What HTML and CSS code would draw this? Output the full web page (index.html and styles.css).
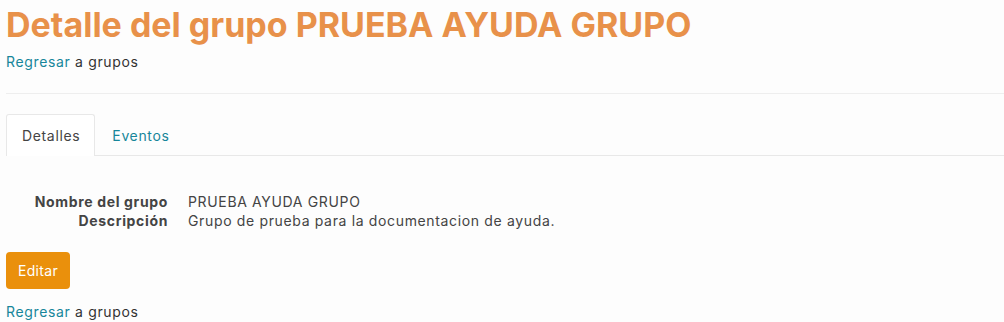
FILE: index.html
```html
<!DOCTYPE html>
<html lang="es">
<head>
    <meta charset="UTF-8">
    <meta name="viewport" content="width=device-width, initial-scale=1.0">
    <title>Detalle del grupo</title>
    <link rel="stylesheet" href="styles.css">
</head>
<body>
    <div class="container">
        <h1 class="title">Detalle del grupo PRUEBA AYUDA GRUPO</h1>
        <p class="back"><a href="#">Regresar</a> a grupos</p>
        <hr>
        <ul class="tabs">
            <li class="tab active"><a href="#">Detalles</a></li>
            <li class="tab"><a href="#">Eventos</a></li>
        </ul>
        <dl class="details">
            <dt>Nombre del grupo</dt>
            <dd>PRUEBA AYUDA GRUPO</dd>
            <dt>Descripción</dt>
            <dd>Grupo de prueba para la documentacion de ayuda.</dd>
        </dl>
        <button class="btn-edit">Editar</button>
        <p class="back back-bottom"><a href="#">Regresar</a> a grupos</p>
    </div>
</body>
</html>
```

FILE: styles.css
```css
body {
    font-family: 'Inter', 'Open Sans', sans-serif;
    margin: 0;
    padding: 0;
    background: #fdfdfd;
    color: #333;
    font-size: 14px;
    letter-spacing: 0.65px;
}
.container {
    padding: 0 0 0 6px;
}
a {
    color: #17869a;
    text-decoration: none;
}
.title {
    margin: 0;
    padding-top: 5px;
    font-size: 34px;
    line-height: 40px;
    font-weight: 700;
    letter-spacing: 0;
    color: #e8914a;
}
.back {
    margin: 7px 0 0;
    line-height: 20px;
}
hr {
    border: none;
    border-top: 1px solid #eeeeee;
    margin: 21px 0 0;
}
.tabs {
    list-style: none;
    margin: 20px 0 0;
    padding: 0;
    display: flex;
    border-bottom: 1px solid #e8e8e8;
}
.tab a {
    display: block;
    padding: 0 16px;
    line-height: 41px;
    border: 1px solid transparent;
    border-bottom: none;
    border-radius: 3px 3px 0 0;
    margin-bottom: -1px;
}
.tab.active a {
    color: #444;
    background: #fff;
    border-color: #e8e8e8;
    padding: 0 14px 0 15px;
}
.details {
    display: grid;
    grid-template-columns: 162px auto;
    column-gap: 20px;
    row-gap: 0;
    margin: 36px 0 0;
    line-height: 19px;
}
.details dt {
    text-align: right;
    font-weight: 700;
    color: #444;
}
.details dd {
    margin: 0;
    color: #444;
}
.btn-edit {
    margin-top: 22px;
    padding: 0 12px;
    height: 37px;
    border: none;
    border-radius: 4px;
    background-color: #ea900c;
    color: #fff;
    font-family: inherit;
    font-size: 14px;
    letter-spacing: 0.3px;
    cursor: pointer;
}
.back-bottom {
    margin-top: 13px;
}
```
